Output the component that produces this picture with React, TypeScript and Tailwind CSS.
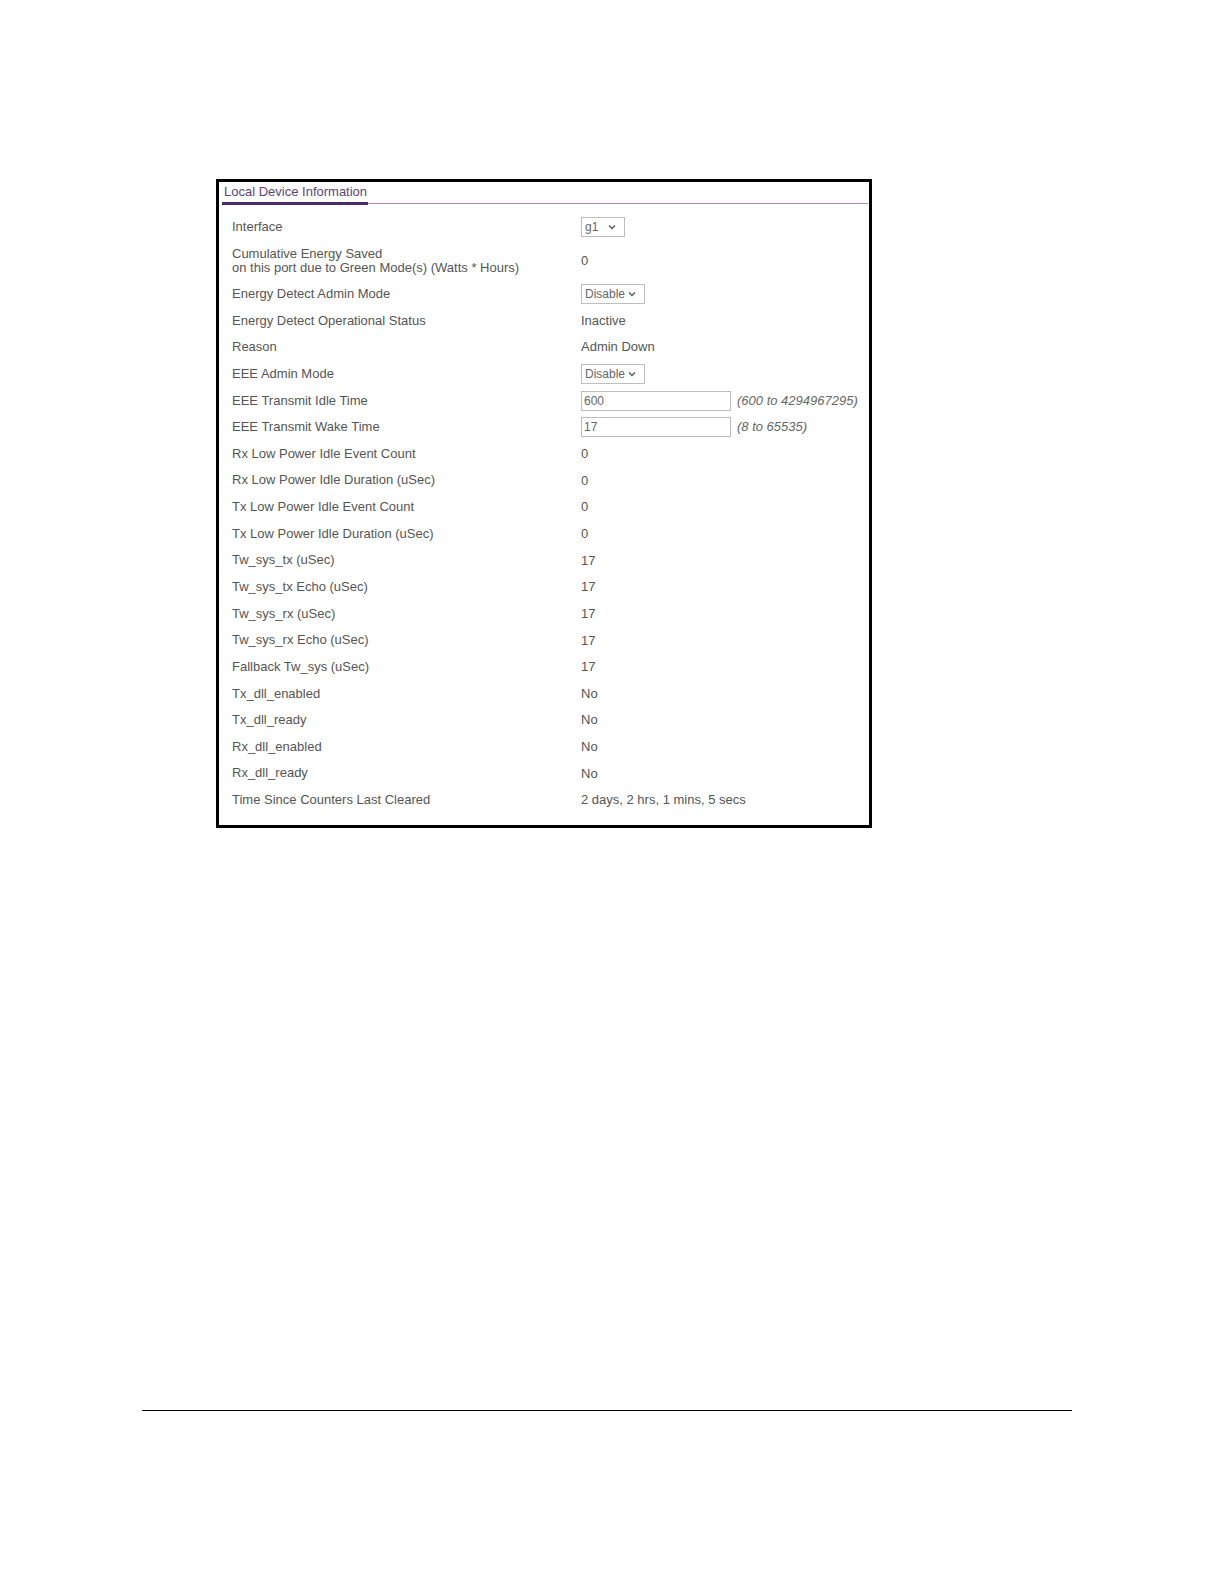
const rows: { label: string; value: string }[] = [
  { label: "Rx Low Power Idle Event Count", value: "0" },
  { label: "Rx Low Power Idle Duration (uSec)", value: "0" },
  { label: "Tx Low Power Idle Event Count", value: "0" },
  { label: "Tx Low Power Idle Duration (uSec)", value: "0" },
  { label: "Tw_sys_tx (uSec)", value: "17" },
  { label: "Tw_sys_tx Echo (uSec)", value: "17" },
  { label: "Tw_sys_rx (uSec)", value: "17" },
  { label: "Tw_sys_rx Echo (uSec)", value: "17" },
  { label: "Fallback Tw_sys (uSec)", value: "17" },
  { label: "Tx_dll_enabled", value: "No" },
  { label: "Tx_dll_ready", value: "No" },
  { label: "Rx_dll_enabled", value: "No" },
  { label: "Rx_dll_ready", value: "No" },
  { label: "Time Since Counters Last Cleared", value: "2 days, 2 hrs, 1 mins, 5 secs" },
];

function Chevron() {
  return (
    <svg width="8" height="6" viewBox="0 0 8 6" className="ml-auto">
      <path d="M1 1.5 L4 4.5 L7 1.5" fill="none" stroke="#555" strokeWidth="1.3" />
    </svg>
  );
}

function FakeSelect({ value, width }: { value: string; width: string }) {
  return (
    <div
      className={`flex h-[20px] items-center border border-[#bdbdbd] bg-white pl-[3px] pr-[8px] text-[12px] text-[#666] ${width}`}
    >
      <span>{value}</span>
      <Chevron />
    </div>
  );
}

function Row({
  label,
  children,
  tall,
}: {
  label: React.ReactNode;
  children: React.ReactNode;
  tall?: boolean;
}) {
  return (
    <div className={`flex items-center ${tall ? "h-[40px]" : "h-[26.65px]"}`}>
      <div className="w-[349px] shrink-0 leading-[14px]">{label}</div>
      <div className="flex items-center">{children}</div>
    </div>
  );
}

function TextInput({ value, hint }: { value: string; hint: string }) {
  return (
    <>
      <div className="flex h-[20px] w-[150px] items-center border border-[#bdbdbd] bg-white pl-[2px] text-[12px] text-[#666]">
        {value}
      </div>
      <span className="ml-[6px] italic text-[#666]">{hint}</span>
    </>
  );
}

export default function App() {
  return (
    <div
      className="w-full bg-white pb-[100px]"
      style={{ fontFamily: '"Liberation Sans", Arial, sans-serif' }}
    >
      <div className="pt-[179px] pl-[216px]">
        <div className="w-[656px] border-[3px] border-black bg-white pb-[12px] pl-[3px] pr-[1px] text-[13px] text-[#555]">
          {/* tab header */}
          <div className="relative h-[22px] border-b border-[#a98cc4]">
            <div className="absolute bottom-[-2px] left-0 h-[3px] w-[146px] bg-[#4b2a74]" />
            <span className="absolute left-[2px] top-0 text-[13px] text-[#5b4577]">
              Local Device Information
            </span>
          </div>

          <div className="pl-[10px] pt-[10px]">
            <Row label="Interface">
              <FakeSelect value="g1" width="w-[44px]" />
            </Row>
            <Row
              tall
              label={
                <>
                  Cumulative Energy Saved
                  <br />
                  on this port due to Green Mode(s) (Watts * Hours)
                </>
              }
            >
              <span>0</span>
            </Row>
            <Row label="Energy Detect Admin Mode">
              <FakeSelect value="Disable" width="w-[64px]" />
            </Row>
            <Row label="Energy Detect Operational Status">
              <span>Inactive</span>
            </Row>
            <Row label="Reason">
              <span>Admin Down</span>
            </Row>
            <Row label="EEE Admin Mode">
              <FakeSelect value="Disable" width="w-[64px]" />
            </Row>
            <Row label="EEE Transmit Idle Time">
              <TextInput value="600" hint="(600 to 4294967295)" />
            </Row>
            <Row label="EEE Transmit Wake Time">
              <TextInput value="17" hint="(8 to 65535)" />
            </Row>
            {rows.map((r) => (
              <Row key={r.label} label={r.label}>
                <span>{r.value}</span>
              </Row>
            ))}
          </div>
        </div>
      </div>

      {/* footer rule */}
      <div className="mt-[582px] ml-[142px] h-px w-[930px] bg-black" />
    </div>
  );
}
